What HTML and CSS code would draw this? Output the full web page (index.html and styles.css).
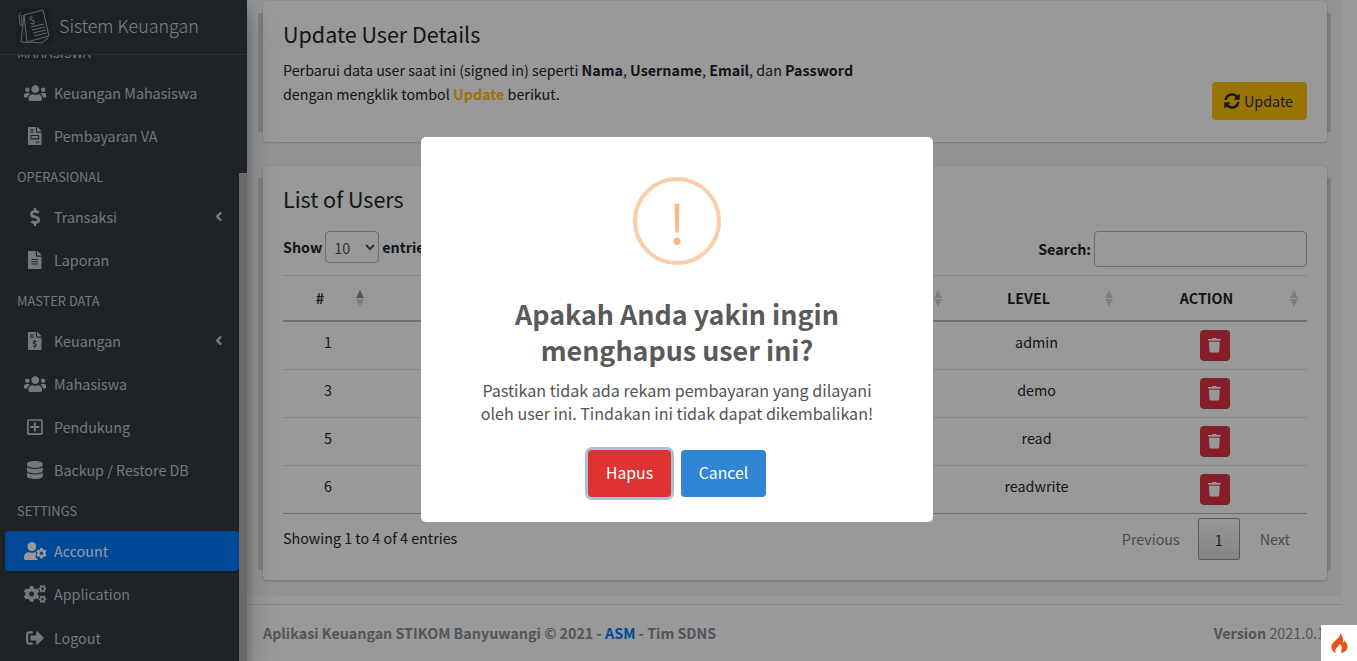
FILE: index.html
```html
<!DOCTYPE html>
<html lang="en">
<head>
    <meta charset="UTF-8">
    <meta name="viewport" content="width=device-width, initial-scale=1.0">
    <title>Sistem Keuangan - Account</title>
    <link rel="stylesheet" href="styles.css">
</head>
<body>

    <svg class="icon-defs" aria-hidden="true">
        <defs>
            <path id="i-users" d="M96 224c35.3 0 64-28.7 64-64s-28.7-64-64-64-64 28.7-64 64 28.7 64 64 64zm448 0c35.3 0 64-28.7 64-64s-28.7-64-64-64-64 28.7-64 64 28.7 64 64 64zm32 32h-64c-17.6 0-33.5 7.1-45.1 18.6 40.3 22.1 68.9 62 75.1 109.4h66c17.7 0 32-14.3 32-32v-32c0-35.3-28.7-64-64-64zm-256 0c61.9 0 112-50.1 112-112S381.9 32 320 32 208 82.1 208 144s50.1 112 112 112zm76.8 32h-8.3c-20.8 10-43.9 16-68.5 16s-47.6-6-68.5-16h-8.3C179.6 288 128 339.6 128 403.2V432c0 26.5 21.5 48 48 48h288c26.5 0 48-21.5 48-48v-28.8c0-63.6-51.6-115.2-115.2-115.2zm-223.7-13.4C161.5 263.1 145.6 256 128 256H64c-35.3 0-64 28.7-64 64v32c0 17.7 14.3 32 32 32h65.9c6.3-47.4 34.9-87.3 75.2-109.4z"/>
            <path id="i-angle" d="M31.7 239l136-136c9.4-9.4 24.6-9.4 33.9 0l22.6 22.6c9.4 9.4 9.4 24.6 0 33.9L127.9 256l96.4 96.4c9.4 9.4 9.4 24.6 0 33.9L201.7 409c-9.4 9.4-24.6 9.4-33.9 0l-136-136c-9.5-9.4-9.5-24.6-.1-34z"/>
            <path id="i-trash" d="M432 32H312l-9.4-18.7A24 24 0 0 0 281.1 0H166.8a23.72 23.72 0 0 0-21.4 13.3L136 32H16A16 16 0 0 0 0 48v32a16 16 0 0 0 16 16h416a16 16 0 0 0 16-16V48a16 16 0 0 0-16-16zM53.2 467a48 48 0 0 0 47.9 45h245.8a48 48 0 0 0 47.9-45L416 128H32z"/>
        </defs>
    </svg>

    <aside class="sidebar">
        <div class="brand">
            <svg class="brand-logo" viewBox="0 0 36 36" fill="none" stroke="#a9a9a9" stroke-width="1">
                <path d="M7 7 26 2l6 26-22 6z"/>
                <path d="M7 7 4 34l6 .5M10 34l15 1 6-5"/>
                <path d="M4 5c-1 0-2 1-2 2l1 10c0 1 2 1 2 0L4.500 7"/>
                <path d="M14 19l13-3M15 22l13-3M16 25l13-3M17 28l13-3"/>
                <text x="12" y="16" class="brand-dollar" transform="rotate(-12 15 12)">$</text>
            </svg>
            <span class="brand-text">Sistem Keuangan</span>
        </div>
        <nav class="menu">
            <div class="menu-head menu-head-cut">MAHASISWA</div>
            <a class="menu-item">
                <span class="menu-icon"><svg class="ic" viewBox="0 0 640 512"><use href="#i-users"/></svg></span>Keuangan Mahasiswa
            </a>
            <a class="menu-item">
                <span class="menu-icon"><svg class="ic" viewBox="0 0 384 512"><path d="M288 256H96v64h192v-64zm89-151L279.1 7c-4.5-4.5-10.6-7-17-7H256v128h128v-6.1c0-6.3-2.5-12.4-7-16.9zm-153 31V0H24C10.7 0 0 10.7 0 24v464c0 13.3 10.7 24 24 24h336c13.3 0 24-10.7 24-24V160H248c-13.2 0-24-10.8-24-24zM64 72c0-4.42 3.58-8 8-8h80c4.42 0 8 3.58 8 8v16c0 4.42-3.58 8-8 8H72c-4.42 0-8-3.58-8-8V72zm0 64c0-4.42 3.58-8 8-8h80c4.42 0 8 3.58 8 8v16c0 4.42-3.58 8-8 8H72c-4.42 0-8-3.58-8-8v-16zm256 304c0 4.42-3.58 8-8 8h-80c-4.42 0-8-3.58-8-8v-16c0-4.42 3.58-8 8-8h80c4.42 0 8 3.58 8 8v16zm0-200v96c0 8.84-7.16 16-16 16H80c-8.84 0-16-7.16-16-16v-96c0-8.84 7.16-16 16-16h224c8.84 0 16 7.16 16 16z"/></svg></span>Pembayaran VA
            </a>
            <div class="menu-head">OPERASIONAL</div>
            <a class="menu-item">
                <span class="menu-icon"><svg class="ic" viewBox="0 0 288 512"><path d="M209.2 233.4l-108-31.6C88.7 198.2 80 186.500 80 173.5c0-16.3 13.2-29.5 29.5-29.5h66.3c12.2 0 24.2 3.7 34.2 10.5 6.1 4.1 14.3 3.1 19.5-2l34.8-34c7.1-6.9 6.1-18.4-1.8-24.5C238 74.8 207.4 64.1 176 64V16c0-8.8-7.2-16-16-16h-32c-8.8 0-16 7.2-16 16v48h-2.5C45.8 64-5.4 118.7.5 183.6c4.2 46.1 39.4 83.6 83.8 96.6l102.5 30c12.5 3.7 21.2 15.3 21.2 28.3 0 16.3-13.2 29.5-29.5 29.5h-66.3C100 368 88 364.3 78 357.5c-6.1-4.1-14.3-3.1-19.5 2l-34.8 34c-7.1 6.9-6.1 18.4 1.8 24.5 24.5 19.2 55.1 29.9 86.5 30v48c0 8.8 7.2 16 16 16h32c8.8 0 16-7.2 16-16v-48.2c46.6-.9 90.3-28.6 105.7-72.7 21.5-61.6-14.6-124.8-72.5-141.7z"/></svg></span>Transaksi
                <svg class="menu-arrow" viewBox="0 0 256 512"><use href="#i-angle"/></svg>
            </a>
            <a class="menu-item">
                <span class="menu-icon"><svg class="ic" viewBox="0 0 384 512"><path d="M224 136V0H24C10.7 0 0 10.7 0 24v464c0 13.3 10.7 24 24 24h336c13.3 0 24-10.7 24-24V160H248c-13.2 0-24-10.8-24-24zm64 236c0 6.6-5.4 12-12 12H108c-6.6 0-12-5.4-12-12v-8c0-6.6 5.4-12 12-12h168c6.6 0 12 5.4 12 12v8zm0-64c0 6.6-5.4 12-12 12H108c-6.6 0-12-5.4-12-12v-8c0-6.6 5.4-12 12-12h168c6.6 0 12 5.4 12 12v8zm0-72v8c0 6.6-5.4 12-12 12H108c-6.6 0-12-5.4-12-12v-8c0-6.6 5.4-12 12-12h168c6.6 0 12 5.4 12 12zm96-114.1v6.1H256V0h6.1c6.4 0 12.5 2.5 17 7l97.9 98c4.5 4.5 7 10.6 7 16.9z"/></svg></span>Laporan
            </a>
            <div class="menu-head">MASTER DATA</div>
            <a class="menu-item">
                <span class="menu-icon"><svg class="ic" viewBox="0 0 384 512"><path d="M377 105L279.1 7c-4.5-4.5-10.6-7-17-7H256v128h128v-6.1c0-6.3-2.5-12.4-7-16.9zm-153 31V0H24C10.7 0 0 10.7 0 24v464c0 13.3 10.7 24 24 24h336c13.3 0 24-10.7 24-24V160H248c-13.2 0-24-10.8-24-24zM64 72c0-4.42 3.58-8 8-8h80c4.42 0 8 3.58 8 8v16c0 4.42-3.58 8-8 8H72c-4.42 0-8-3.58-8-8V72zm0 80v-16c0-4.42 3.58-8 8-8h80c4.42 0 8 3.58 8 8v16c0 4.42-3.58 8-8 8H72c-4.42 0-8-3.58-8-8zm144 263.88V440c0 4.42-3.58 8-8 8h-16c-4.42 0-8-3.58-8-8v-24.29c-11.29-.58-22.27-4.52-31.37-11.35-3.9-2.93-4.1-8.77-.57-12.14l11.75-11.21c2.77-2.64 6.89-2.76 10.13-.73 3.87 2.42 8.26 3.72 12.82 3.72h28.11c6.5 0 11.8-5.92 11.8-13.19 0-5.95-3.61-11.19-8.77-12.73l-45-13.5c-18.59-5.58-31.58-23.42-31.58-43.39 0-24.52 19.05-44.44 42.67-45.07V232c0-4.42 3.58-8 8-8h16c4.42 0 8 3.58 8 8v24.29c11.29.58 22.27 4.51 31.37 11.35 3.9 2.93 4.1 8.77.57 12.14l-11.75 11.21c-2.77 2.64-6.89 2.76-10.13.73-3.87-2.43-8.26-3.72-12.82-3.72h-28.11c-6.5 0-11.8 5.92-11.8 13.19 0 5.95 3.61 11.19 8.77 12.73l45 13.5c18.59 5.58 31.58 23.42 31.58 43.39 0 24.53-19.05 44.44-42.67 45.07z"/></svg></span>Keuangan
                <svg class="menu-arrow" viewBox="0 0 256 512"><use href="#i-angle"/></svg>
            </a>
            <a class="menu-item">
                <span class="menu-icon"><svg class="ic" viewBox="0 0 640 512"><use href="#i-users"/></svg></span>Mahasiswa
            </a>
            <a class="menu-item">
                <span class="menu-icon"><svg class="ic" viewBox="0 0 448 512"><path d="M352 240v32c0 6.6-5.4 12-12 12h-88v88c0 6.6-5.4 12-12 12h-32c-6.6 0-12-5.4-12-12v-88h-88c-6.6 0-12-5.4-12-12v-32c0-6.6 5.4-12 12-12h88v-88c0-6.6 5.4-12 12-12h32c6.6 0 12 5.4 12 12v88h88c6.6 0 12 5.4 12 12zm96-160v352c0 26.5-21.5 48-48 48H48c-26.5 0-48-21.5-48-48V80c0-26.5 21.5-48 48-48h352c26.5 0 48 21.5 48 48zm-48 346V86c0-3.3-2.7-6-6-6H54c-3.3 0-6 2.7-6 6v340c0 3.3 2.7 6 6 6h340c3.3 0 6-2.7 6-6z"/></svg></span>Pendukung
            </a>
            <a class="menu-item">
                <span class="menu-icon"><svg class="ic" viewBox="0 0 448 512"><path d="M448 73.143v45.714C448 159.143 347.667 192 224 192S0 159.143 0 118.857V73.143C0 32.857 100.333 0 224 0s224 32.857 224 73.143zM448 176v102.857C448 319.143 347.667 352 224 352S0 319.143 0 278.857V176c48.125 33.143 136.208 48.572 224 48.572S399.874 209.143 448 176zm0 160v102.857C448 479.143 347.667 512 224 512S0 479.143 0 438.857V336c48.125 33.143 136.208 48.572 224 48.572S399.874 369.143 448 336z"/></svg></span>Backup / Restore DB
            </a>
            <div class="menu-head">SETTINGS</div>
            <a class="menu-item active">
                <span class="menu-icon"><svg class="ic" viewBox="0 0 640 512"><path d="M224 256c70.700 0 128-57.300 128-128S294.700 0 224 0 96 57.300 96 128s57.300 128 128 128zM134.400 288h16.700c22.300 10.200 46.900 16 72.900 16s50.600-5.800 72.900-16h16.700c10 0 20 1.200 29.400 3.300-3 13-4 22-4 29 0 20 5 38 12 52l-22 12c-7 4-9 13-6 20 8 25 20 44 34 62 6 7 14 8 22 6v2c0 14 3 28 12 38H48c-26.500 0-48-21.500-48-48v-41.600C0 348.200 60.200 288 134.400 288z"/><path d="M610.500 341.300c2.600-14.100 2.600-28.500 0-42.600l25.800-14.900c3-1.700 4.300-5.200 3.300-8.500-6.700-21.600-18.200-41.200-33.200-57.400-2.300-2.500-6-3.100-9-1.400l-25.800 14.900c-10.900-9.300-23.400-16.500-36.900-21.300v-29.800c0-3.400-2.400-6.400-5.700-7.100-22.300-5-45-4.800-66.200 0-3.300.7-5.700 3.700-5.700 7.100v29.800c-13.500 4.800-26 12-36.900 21.300l-25.800-14.900c-2.900-1.700-6.700-1.100-9 1.400-15 16.200-26.500 35.800-33.200 57.400-1 3.300.4 6.800 3.300 8.500l25.800 14.900c-2.600 14.100-2.600 28.500 0 42.600l-25.800 14.900c-3 1.700-4.300 5.200-3.300 8.500 6.700 21.600 18.200 41.100 33.200 57.400 2.300 2.500 6 3.100 9 1.400l25.800-14.900c10.900 9.300 23.400 16.500 36.900 21.300v29.800c0 3.400 2.400 6.400 5.700 7.100 22.300 5 45 4.800 66.200 0 3.300-.7 5.700-3.700 5.700-7.100v-29.800c13.500-4.800 26-12 36.900-21.300l25.800 14.900c2.900 1.700 6.700 1.100 9-1.400 15-16.200 26.500-35.800 33.200-57.400 1-3.300-.4-6.800-3.300-8.500l-25.800-14.900zM496 368.500c-26.800 0-48.500-21.800-48.500-48.500s21.800-48.500 48.500-48.500 48.500 21.800 48.500 48.500-21.700 48.500-48.500 48.500z"/></svg></span>Account
            </a>
            <a class="menu-item">
                <span class="menu-icon"><svg class="ic" viewBox="0 0 640 512"><path d="M512.100 191l-8.200 14.300c-3 5.300-9.400 7.500-15.100 5.400-11.800-4.400-22.600-10.700-32.100-18.600-4.600-3.800-5.800-10.500-2.800-15.700l8.200-14.300c-6.900-8-12.300-17.300-15.900-27.400h-16.500c-6 0-11.200-4.300-12.200-10.300-2-12-2.100-24.600 0-37.100 1-6 6.200-10.400 12.200-10.400h16.500c3.600-10.100 9-19.400 15.900-27.400l-8.200-14.300c-3-5.200-1.900-11.900 2.800-15.700 9.500-7.900 20.400-14.200 32.100-18.600 5.700-2.100 12.100.1 15.100 5.400l8.200 14.300c10.500-1.900 21.200-1.900 31.700 0L552 6.300c3-5.300 9.400-7.500 15.100-5.400 11.800 4.400 22.600 10.700 32.100 18.600 4.600 3.800 5.800 10.500 2.800 15.700l-8.200 14.300c6.900 8 12.300 17.300 15.900 27.400h16.500c6 0 11.200 4.300 12.200 10.300 2 12 2.100 24.600 0 37.100-1 6-6.200 10.400-12.200 10.400h-16.500c-3.600 10.100-9 19.400-15.900 27.400l8.200 14.300c3 5.200 1.900 11.900-2.800 15.700-9.500 7.900-20.400 14.200-32.100 18.600-5.700 2.100-12.100-.1-15.100-5.400l-8.200-14.300c-10.400 1.900-21.200 1.900-31.700 0zm-10.500-58.800c38.500 29.600 82.400-14.300 52.800-52.800-38.500-29.700-82.400 14.300-52.800 52.800zM386.300 286.100l33.700 16.800c10.100 5.800 14.500 18.100 10.500 29.100-8.900 24.200-26.400 46.400-42.600 65.800-7.400 8.900-20.200 11.100-30.300 5.300l-29.100-16.800c-16 13.700-34.600 24.600-54.900 31.700v33.600c0 11.600-8.300 21.600-19.700 23.600-24.600 4.200-50.400 4.400-75.900 0-11.500-2-20-11.900-20-23.600V418c-20.300-7.200-38.900-18-54.900-31.700L74 403c-10 5.800-22.900 3.600-30.300-5.300-16.200-19.400-33.300-41.600-42.200-65.700-4-10.900.4-23.200 10.500-29.100l33.300-16.800c-3.900-20.900-3.900-42.400 0-63.400L12 205.800c-10.100-5.800-14.600-18.100-10.500-29 8.900-24.200 26-46.400 42.200-65.800 7.400-8.900 20.200-11.100 30.300-5.300l29.100 16.800c16-13.700 34.600-24.600 54.900-31.700V57.100c0-11.500 8.200-21.500 19.600-23.500 24.600-4.200 50.500-4.400 76-.1 11.500 2 20 11.900 20 23.600v33.600c20.300 7.200 38.900 18 54.900 31.700l29.100-16.800c10-5.800 22.900-3.600 30.300 5.300 16.200 19.400 33.200 41.600 42.100 65.800 4 10.900.1 23.200-10 29.100l-33.700 16.800c3.900 21 3.900 42.500 0 63.500zm-117.600 21.100c59.200-77-28.700-164.900-105.700-105.700-59.200 77 28.700 164.900 105.700 105.700zm243.400 182.700l-8.200 14.300c-3 5.300-9.400 7.500-15.100 5.400-11.800-4.400-22.600-10.700-32.100-18.600-4.600-3.800-5.800-10.500-2.800-15.700l8.200-14.300c-6.900-8-12.300-17.300-15.900-27.400h-16.500c-6 0-11.200-4.300-12.200-10.300-2-12-2.100-24.600 0-37.100 1-6 6.200-10.400 12.200-10.400h16.500c3.600-10.100 9-19.400 15.900-27.400l-8.200-14.300c-3-5.200-1.900-11.900 2.800-15.700 9.500-7.900 20.400-14.200 32.100-18.600 5.700-2.100 12.100.1 15.100 5.400l8.200 14.300c10.500-1.900 21.200-1.900 31.700 0l8.200-14.300c3-5.300 9.400-7.500 15.100-5.400 11.800 4.400 22.600 10.700 32.100 18.600 4.600 3.800 5.800 10.500 2.800 15.700l-8.200 14.300c6.900 8 12.300 17.300 15.900 27.400h16.500c6 0 11.200 4.300 12.200 10.300 2 12 2.100 24.600 0 37.100-1 6-6.200 10.400-12.200 10.400h-16.500c-3.600 10.100-9 19.400-15.900 27.400l8.200 14.300c3 5.200 1.900 11.900-2.800 15.700-9.500 7.900-20.400 14.200-32.100 18.600-5.700 2.100-12.100-.1-15.100-5.400l-8.200-14.300c-10.400 1.900-21.200 1.900-31.700 0zM501.600 431c38.500 29.600 82.400-14.300 52.800-52.800-38.500-29.600-82.400 14.300-52.800 52.800z"/></svg></span>Application
            </a>
            <a class="menu-item">
                <span class="menu-icon"><svg class="ic" viewBox="0 0 512 512"><path d="M497 273L329 441c-15 15-41 4.500-41-17v-96H152c-13.300 0-24-10.700-24-24v-96c0-13.300 10.700-24 24-24h136V88c0-21.400 25.900-32 41-17l168 168c9.300 9.400 9.300 24.600 0 34zM192 436v-40c0-6.600-5.400-12-12-12H96c-17.700 0-32-14.300-32-32V160c0-17.700 14.300-32 32-32h84c6.600 0 12-5.400 12-12V76c0-6.600-5.400-12-12-12H96c-53 0-96 43-96 96v192c0 53 43 96 96 96h84c6.600 0 12-5.400 12-12z"/></svg></span>Logout
            </a>
        </nav>
        <div class="side-thumb"></div>
    </aside>

    <div class="wrapper">
        <main class="content">
            <section class="card card-update">
                <div>
                    <h2>Update User Details</h2>
                    <p class="card-text">Perbarui data user saat ini (signed in) seperti <b>Nama</b>, <b>Username</b>, <b>Email</b>, dan <b>Password</b><br>dengan mengklik tombol <b class="text-warning">Update</b> berikut.</p>
                </div>
                <a class="btn-update">
                    <svg class="ic-sync" viewBox="0 0 512 512"><path d="M370.720 133.280C339.458 104.008 298.888 87.962 255.848 88c-77.458.068-144.328 53.178-162.791 126.850-1.344 5.363-6.122 9.150-11.651 9.150H24.103c-7.498 0-13.194-6.807-11.807-14.176C33.933 94.924 134.813 8 256 8c66.448 0 126.791 26.136 171.315 68.685L463.030 40.970C478.149 25.851 504 36.559 504 57.941V192c0 13.255-10.745 24-24 24H345.941c-21.382 0-32.090-25.851-16.971-40.971l41.750-41.749zM32 296h134.059c21.382 0 32.090 25.851 16.971 40.971l-41.750 41.750c31.262 29.273 71.835 45.319 114.876 45.280 77.418-.07 144.315-53.144 162.787-126.849 1.344-5.363 6.122-9.150 11.651-9.150h57.304c7.498 0 13.194 6.807 11.807 14.176C478.067 417.076 377.187 504 256 504c-66.448 0-126.791-26.136-171.315-68.685L48.970 471.030C33.851 486.149 8 475.441 8 454.059V320c0-13.255 10.745-24 24-24z"/></svg>
                    Update
                </a>
            </section>

            <section class="card card-users">
                <h2>List of Users</h2>
                <div class="dt-top">
                    <label class="dt-length">Show
                        <select class="dt-select"><option>10</option></select>
                        entries</label>
                    <label class="dt-search">Search: <input class="dt-input" type="search"></label>
                </div>
                <table class="dt-table">
                    <colgroup>
                        <col class="col-id"><col><col class="col-level"><col class="col-action">
                    </colgroup>
                    <thead>
                        <tr>
                            <th class="sort-asc">#</th>
                            <th></th>
                            <th>LEVEL</th>
                            <th>ACTION</th>
                        </tr>
                    </thead>
                    <tbody>
                        <tr>
                            <td>1</td><td></td><td>admin</td>
                            <td><a class="btn-del"><svg class="ic-trash" viewBox="0 0 448 512"><use href="#i-trash"/></svg></a></td>
                        </tr>
                        <tr>
                            <td>3</td><td></td><td>demo</td>
                            <td><a class="btn-del"><svg class="ic-trash" viewBox="0 0 448 512"><use href="#i-trash"/></svg></a></td>
                        </tr>
                        <tr>
                            <td>5</td><td></td><td>read</td>
                            <td><a class="btn-del"><svg class="ic-trash" viewBox="0 0 448 512"><use href="#i-trash"/></svg></a></td>
                        </tr>
                        <tr>
                            <td>6</td><td></td><td>readwrite</td>
                            <td><a class="btn-del"><svg class="ic-trash" viewBox="0 0 448 512"><use href="#i-trash"/></svg></a></td>
                        </tr>
                    </tbody>
                </table>
                <div class="dt-bottom">
                    <div class="dt-info">Showing 1 to 4 of 4 entries</div>
                    <div class="dt-pages">
                        <a class="page-link">Previous</a>
                        <a class="page-link page-current">1</a>
                        <a class="page-link page-next">Next</a>
                    </div>
                </div>
            </section>
        </main>
        <footer class="footer">
            <div><b>Aplikasi Keuangan STIKOM Banyuwangi © 2021 - <a class="footer-link">ASM</a> - Tim SDNS</b></div>
            <div><b>Version</b> 2021.0.1</div>
        </footer>
    </div>

    <div class="overlay">
        <div class="modal" role="dialog">
            <div class="warn-icon">!</div>
            <h3>Apakah Anda yakin ingin<br>menghapus user ini?</h3>
            <p>Pastikan tidak ada rekam pembayaran yang dilayani<br>oleh user ini. Tindakan ini tidak dapat dikembalikan!</p>
            <div class="modal-actions">
                <button class="btn-confirm">Hapus</button>
                <button class="btn-cancel">Cancel</button>
            </div>
        </div>
    </div>

    <div class="ci-badge">
        <svg viewBox="0 0 17 20" fill="#e8521a"><path d="M9 0C10 3 7 5 5 7 3 9 1 10 .5 13 0 16 2 19 5.500 20 4 18.500 4 17 5 15.500 6 14 8 13 8.500 11 10.500 12.500 11.500 14.500 10.500 16.500 10 18 10 19 10.500 20 14 19 17 16.500 16.500 13 16 10 14 9 13.500 7 13.500 8 13 9 12 9.500 12.500 6 11.500 2.500 9 0z"/></svg>
    </div>

</body>
</html>
```
FILE: styles.css
```css
:root {
    --sidebar-bg: #343a40;
    --sidebar-text: #c2c7d0;
    --page-bg: #f4f6f9;
    --line: #dee2e6;
    --line-dark: #b8b8b8;
    --text: #212529;
}

*, *::before, *::after {
    box-sizing: border-box;
}

html, body {
    height: 100%;
}

body {
    margin: 0;
    display: flex;
    overflow: hidden;
    background: #fff;
    color: var(--text);
    font-family: "Noto Sans CJK SC", "Noto Sans", sans-serif;
    font-size: 14.3px;
    line-height: 24px;
}

.icon-defs {
    display: none;
}

/* sidebar */
.sidebar {
    position: relative;
    z-index: 1;
    flex: none;
    display: flex;
    flex-direction: column;
    width: 247px;
    height: 100%;
    background: var(--sidebar-bg);
    color: var(--sidebar-text);
    box-shadow: 0 14px 28px rgba(0, 0, 0, .25), 0 10px 10px rgba(0, 0, 0, .22);
}

.brand {
    flex: none;
    display: flex;
    align-items: center;
    gap: 6px;
    height: 55px;
    padding: 0 0 2px 17px;
    border-bottom: 1px solid #4b545c;
}

.brand-logo {
    width: 36px;
    height: 36px;
    background: #2f3439;
}

.brand-dollar {
    fill: #b5b5b5;
    stroke: none;
    font-size: 10px;
}

.brand-text {
    padding-bottom: 2px;
    color: rgba(255, 255, 255, .8);
    font-size: 17.9px;
    font-weight: 300;
}

.menu {
    flex: 1;
    overflow: hidden;
}

.menu-head {
    height: 38px;
    padding: 6px 0 0 17px;
    font-size: 12.85px;
    line-height: 24px;
}

.menu-head-cut {
    margin-top: -20px;
}

.menu-item {
    display: flex;
    align-items: center;
    gap: 4px;
    width: 234px;
    height: 40px;
    margin: 0 0 3px 5px;
    padding: 0 17px 0 15px;
    border-radius: 4px;
}

.menu-item:last-child {
    margin-top: 4px;
}

.menu-item.active {
    background: #007bff;
    color: #fff;
    box-shadow: 0 1px 3px rgba(0, 0, 0, .2);
}

.menu-icon {
    flex: none;
    display: flex;
    justify-content: center;
    width: 30px;
}

.ic {
    display: block;
    height: 18px;
    fill: currentColor;
}

.menu-arrow {
    height: 15px;
    margin: -2px 0 0 auto;
    fill: currentColor;
}

.side-thumb {
    position: absolute;
    top: 173px;
    right: 0;
    bottom: 0;
    width: 8px;
    background: #b0b0b0;
}

/* main area */
.wrapper {
    flex: none;
    width: 1095px;
}

.content {
    position: relative;
    z-index: 0;
    padding: 1px 15px 16px 16px;
    background: var(--page-bg);
}

.card {
    position: relative;
    padding: 18px 20px 20px;
    border-radius: 4px;
    background: #fff;
    box-shadow: 0 0 1px rgba(0, 0, 0, .125), 0 1px 3px rgba(0, 0, 0, .2);
}

.card::before {
    content: '';
    position: absolute;
    top: 12px;
    right: -4px;
    bottom: 10px;
    left: -5px;
    z-index: -1;
    background: #d5d5d5;
}

.card-update {
    display: flex;
    justify-content: space-between;
    padding-bottom: 22px;
    margin-bottom: 24px;
}

h2 {
    margin: 0 0 10px;
    font-size: 21.5px;
    font-weight: 400;
    line-height: 29px;
}

.card-text {
    margin: 0 0 14px;
}

.text-warning {
    color: #ffc107;
}

.btn-update {
    align-self: flex-end;
    display: flex;
    align-items: center;
    gap: 4px;
    height: 38px;
    padding: 0 14px 0 12px;
    border-radius: 4px;
    background: #ffc107;
    color: #1f2d3d;
}

.ic-sync {
    width: 16px;
    height: 16px;
    fill: currentColor;
}

.card-users h2 {
    margin-bottom: 18px;
}

.dt-top {
    display: flex;
    justify-content: space-between;
    align-items: flex-start;
    height: 36px;
}

.dt-length,
.dt-search {
    display: flex;
    align-items: center;
    gap: 3px;
    font-weight: 700;
}

.dt-length {
    height: 32px;
}

.dt-search {
    height: 36px;
}

.dt-select {
    width: 54px;
    height: 32px;
    padding: 0 4px;
    border: 1px solid #b5b5b5;
    border-radius: 4px;
    background: #fff;
    color: #495057;
    font: inherit;
    font-weight: 400;
}

.dt-input {
    width: 213px;
    height: 36px;
    border: 1px solid #b5b5b5;
    border-radius: 4px;
    background: #fff;
}

.dt-table {
    width: 100%;
    margin-top: 8px;
    border-spacing: 0;
    table-layout: fixed;
}

.col-id { width: 90px; }
.col-level { width: 171px; }
.col-action { width: 185px; }

.dt-table th {
    position: relative;
    height: 47px;
    padding: 0 30px 0 14px;
    border-top: 1px solid var(--line);
    border-bottom: 2px solid var(--line-dark);
    font-weight: 700;
    text-align: center;
}

/* sort arrows */
.dt-table th::before,
.dt-table th::after {
    content: '';
    position: absolute;
    right: 9px;
    border-right: 4.5px solid transparent;
    border-left: 4.5px solid transparent;
}

.dt-table th::before {
    top: 14px;
    border-bottom: 8px solid #d3d3d3;
}

.dt-table th::after {
    top: 23px;
    border-top: 8px solid #d3d3d3;
}

.dt-table th.sort-asc::before {
    border-bottom-color: #8c8c8c;
}

.dt-table td {
    height: 48px;
    padding: 8px 0;
    border-bottom: 1px solid var(--line);
    text-align: center;
    vertical-align: top;
}

.dt-table tbody tr:last-child td {
    border-bottom-color: var(--line-dark);
}

.btn-del {
    display: inline-flex;
    align-items: center;
    justify-content: center;
    width: 30px;
    height: 31px;
    border-radius: 4px;
    background: #dc3545;
    color: #fff;
    vertical-align: top;
}

.ic-trash {
    height: 14.5px;
    fill: currentColor;
}

.dt-bottom {
    display: flex;
    justify-content: space-between;
    margin-top: 4px;
}

.dt-info {
    padding-top: 8px;
}

.dt-pages {
    display: flex;
    gap: 2px;
}

.page-link {
    height: 42px;
    padding: 9px 17px;
    color: #808080;
}

.page-current {
    width: 42px;
    margin-left: -1px;
    padding: 9px 0;
    border: 1px solid #979797;
    border-radius: 2px;
    background: linear-gradient(to bottom, #fff 0%, #dcdcdc 100%);
    color: #333;
    text-align: center;
}

.page-next {
    margin-left: 1px;
}

.footer {
    display: flex;
    justify-content: space-between;
    height: 57px;
    margin-top: 8px;
    padding: 16px 17px 0 16px;
    border-top: 1px solid var(--line);
    background: #fff;
    color: #869099;
}

.footer-link {
    color: #007bff;
}

/* sweetalert style dialog */
.overlay {
    position: fixed;
    z-index: 10;
    top: 0;
    right: 0;
    bottom: 0;
    left: 0;
    padding: 137px 0 0 421px;
    background: rgba(0, 0, 0, .4);
}

.modal {
    display: flex;
    flex-direction: column;
    align-items: center;
    width: 512px;
    height: 385px;
    padding-top: 40px;
    border-radius: 5px;
    background: #fff;
    color: #545454;
    text-align: center;
}

.warn-icon {
    flex: none;
    width: 88px;
    height: 88px;
    border: 4px solid #facea8;
    border-radius: 50%;
    color: #f8bb86;
    font-size: 54px;
    font-weight: 400;
    line-height: 80px;
}

.modal h3 {
    margin: 31px 0 11px;
    color: #595959;
    font-size: 26.85px;
    font-weight: 700;
    line-height: 36px;
}

.modal p {
    margin: 0 0 25px;
    font-size: 16.1px;
    line-height: 23px;
}

.modal-actions {
    display: flex;
    gap: 10px;
}

.modal-actions button {
    height: 47px;
    padding: 0 0 2px;
    border: 0;
    border-radius: 4px;
    color: #fff;
    font: inherit;
    font-size: 15.75px;
}

.btn-confirm {
    width: 83px;
    background: #dd3333;
    box-shadow: 0 0 0 3px rgba(50, 100, 150, .4);
}

.btn-cancel {
    width: 85px;
    background: #3085d6;
}

.ci-badge {
    position: fixed;
    z-index: 20;
    right: 0;
    bottom: 0;
    display: flex;
    align-items: center;
    justify-content: center;
    width: 36px;
    height: 36px;
    background: #fff;
}

.ci-badge svg {
    width: 17px;
    height: 20px;
}
```
